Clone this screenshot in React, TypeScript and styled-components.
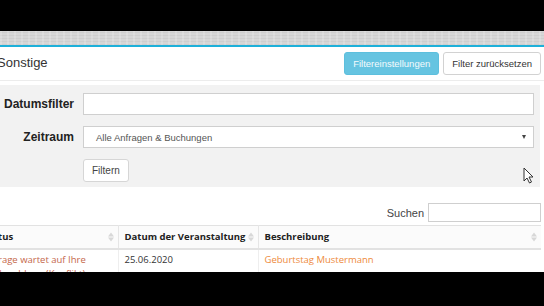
import styled, { createGlobalStyle } from "styled-components";

const GlobalStyle = createGlobalStyle`
  html, body {
    margin: 0;
    padding: 0;
    background: #000;
    overflow: hidden;
  }
  * {
    box-sizing: border-box;
  }
`;

const Page = styled.div`
  width: 544px;
  height: 306px;
  display: flex;
  flex-direction: column;
  overflow: hidden;
  position: relative;
  background: #fff;
  font-family: "Liberation Sans", Arial, sans-serif;
  color: #333;
`;

const Letterbox = styled.div<{ $h: number }>`
  flex: 0 0 ${({ $h }) => $h}px;
  background: #000;
`;

const Texture = styled.div`
  flex: 0 0 14px;
  background-color: #d6d6d6;
  background-image: repeating-linear-gradient(
      90deg,
      rgba(255, 255, 255, 0.18) 0 2px,
      transparent 2px 7px
    ),
    repeating-linear-gradient(0deg, rgba(0, 0, 0, 0.04) 0 1px, transparent 1px 3px);
`;

const Accent = styled.div`
  flex: 0 0 2px;
  background: #1eb0d9;
`;

const Main = styled.main`
  flex: 1 1 auto;
  overflow: hidden;
  display: flex;
  flex-direction: column;
  & > * {
    flex-shrink: 0;
  }
`;

const Header = styled.header`
  height: 34px;
  display: flex;
  align-items: center;
  justify-content: space-between;
  padding-right: 3px;
  border-bottom: 1px solid #ececec;
`;

const Title = styled.h3`
  margin: 0 0 2px -3px;
  font-size: 13px;
  font-weight: normal;
  color: #333;
`;

const Actions = styled.div`
  display: flex;
  gap: 4px;
`;

const Button = styled.button<{ $variant?: "info" | "default" }>`
  height: 23px;
  padding: 0 8px;
  font-family: "Liberation Sans", Arial, sans-serif;
  font-size: 9.5px;
  border-radius: 3px;
  border: 1px solid ${({ $variant }) => ($variant === "info" ? "#5dbfdd" : "#d2d2d2")};
  background: ${({ $variant }) => ($variant === "info" ? "#66c4e1" : "#fff")};
  color: ${({ $variant }) => ($variant === "info" ? "#f4fbfd" : "#333")};
  cursor: pointer;
`;

const FilterPanel = styled.section`
  margin: 4px 4px 0 0;
  background: #f2f2f2;
  padding: 8px 6px 5px 0;
  display: grid;
  grid-template-columns: 74px 1fr;
  column-gap: 9px;
  row-gap: 11px;
  align-items: center;
`;

const Label = styled.label`
  text-align: right;
  font-size: 12px;
  font-weight: bold;
  color: #222;
`;

const Field = styled.div`
  height: 22px;
  background: #fff;
  border: 1px solid #cfcfcf;
  display: flex;
  align-items: center;
  justify-content: space-between;
  padding: 0 7px 0 12px;
  font-size: 9.5px;
  color: #555;
`;

const Caret = styled.span`
  width: 0;
  height: 0;
  border-left: 2.5px solid transparent;
  border-right: 2.5px solid transparent;
  border-top: 4px solid #444;
`;

const FilterButton = styled.button`
  grid-column: 2;
  justify-self: start;
  height: 23px;
  padding: 0 8px;
  background: #fff;
  border: 1px solid #d6d6d6;
  border-radius: 3px;
  font-family: "Liberation Sans", Arial, sans-serif;
  font-size: 10px;
  color: #444;
`;

const SearchRow = styled.div`
  margin: 16px 3px 0 0;
  display: flex;
  justify-content: flex-end;
  align-items: center;
  gap: 4px;
  font-size: 11px;
  color: #444;
`;

const SearchInput = styled.div`
  width: 113px;
  height: 19px;
  border: 1px solid #cfcfcf;
  background: #fff;
`;

const Table = styled.table`
  margin: 3px 3px 0 -23px;
  width: calc(100% + 20px);
  border-collapse: collapse;
  table-layout: fixed;
  font-family: "Open Sans", "Noto Sans", sans-serif;
  font-size: 9.5px;
`;

const Th = styled.th<{ $w?: number }>`
  ${({ $w }) => ($w ? `width: ${$w}px;` : "")}
  height: 23px;
  padding: 0 14px 0 6px;
  text-align: left;
  font-size: 9.5px;
  font-weight: 700;
  color: #222;
  background: #fbfbfb;
  border-top: 1px solid #e2e2e2;
  border-bottom: 2px solid #e2e2e2;
  border-right: 1px solid #e6e6e6;
  position: relative;
  white-space: nowrap;
  &:last-child {
    border-right: none;
  }
`;

const SortIcon = styled.span`
  position: absolute;
  right: 4px;
  top: 50%;
  transform: translateY(-50%);
  display: flex;
  flex-direction: column;
  gap: 1px;
  &::before,
  &::after {
    content: "";
    width: 0;
    height: 0;
    border-left: 3px solid transparent;
    border-right: 3px solid transparent;
  }
  &::before {
    border-bottom: 4px solid #d8d8d8;
  }
  &::after {
    border-top: 4px solid #d8d8d8;
  }
`;

const Td = styled.td<{ $color?: string }>`
  padding: 3px 6px;
  vertical-align: top;
  line-height: 14px;
  color: ${({ $color }) => $color || "#333"};
  border-right: 1px solid #eeeeee;
  &:last-child {
    border-right: none;
  }
`;

const Pointer = styled.svg`
  position: absolute;
  left: 523px;
  top: 167px;
`;

export default function App() {
  return (
    <>
      <GlobalStyle />
      <Page>
        <Letterbox $h={31} />
        <Texture />
        <Accent />
        <Main>
          <Header>
            <Title>Sonstige</Title>
            <Actions>
              <Button $variant="info">Filtereinstellungen</Button>
              <Button>Filter zurücksetzen</Button>
            </Actions>
          </Header>
          <FilterPanel>
            <Label>Datumsfilter</Label>
            <Field />
            <Label>Zeitraum</Label>
            <Field>
              Alle Anfragen &amp; Buchungen
              <Caret />
            </Field>
            <FilterButton>Filtern</FilterButton>
          </FilterPanel>
          <SearchRow>
            Suchen
            <SearchInput />
          </SearchRow>
          <Table>
            <thead>
              <tr>
                <Th $w={141}>
                  Status
                  <SortIcon />
                </Th>
                <Th $w={140}>
                  Datum der Veranstaltung
                  <SortIcon />
                </Th>
                <Th>
                  Beschreibung
                  <SortIcon />
                </Th>
              </tr>
            </thead>
            <tbody>
              <tr>
                <Td $color="#c4664a">Anfrage wartet auf Ihre Rückmeldung (Konflikt)</Td>
                <Td>25.06.2020</Td>
                <Td $color="#ee8a3c">Geburtstag Mustermann</Td>
              </tr>
            </tbody>
          </Table>
        </Main>
        <Letterbox $h={34} />
        <Pointer width="11" height="17" viewBox="0 0 11 17">
          <path
            d="M1 1 L1 14 L4 11 L6.5 16 L8.5 15 L6 10 L10 10 Z"
            fill="#fff"
            stroke="#333"
            strokeWidth="1"
            strokeLinejoin="round"
          />
        </Pointer>
      </Page>
    </>
  );
}
